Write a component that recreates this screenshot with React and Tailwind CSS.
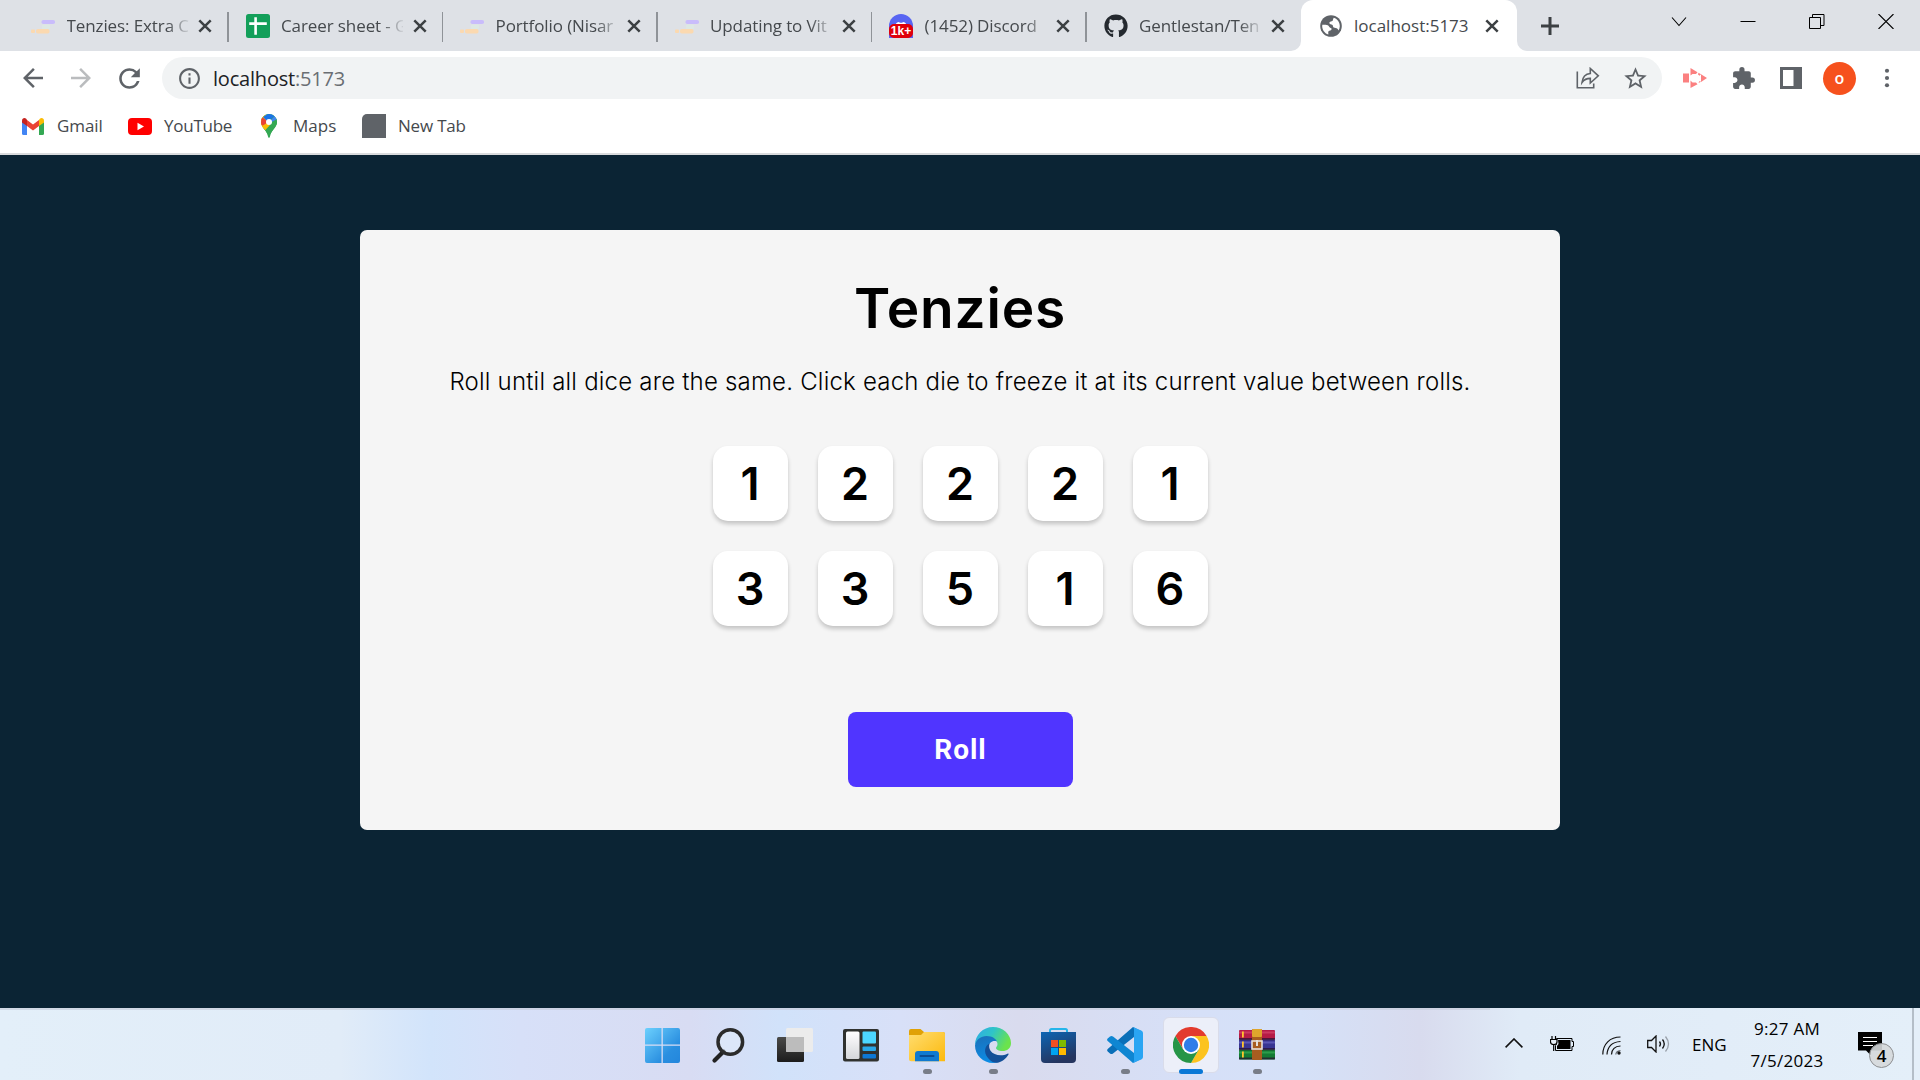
import React from "react";
import { MdExtension, MdStarBorder, MdOutlineInfo, MdRefresh, MdArrowBack, MdArrowForward } from "react-icons/md";
import { FaGithub, FaDiscord } from "react-icons/fa";

function ScrimbaIcon() {
  return (
    <svg viewBox="0 0 24 24" className="h-6 w-6 shrink-0">
      <rect x="10.5" y="6" width="13.5" height="4" rx="1.8" fill="#c9bcfb" />
      <rect x="11" y="10.5" width="8" height="4.5" rx="1" fill="#dde8e4" />
      <rect x="5" y="15" width="13.5" height="4.5" rx="1.8" fill="#fbd9b0" />
      <rect x="0" y="15.5" width="4" height="3.5" rx="1" fill="#fbd9b0" />
    </svg>
  );
}

function SheetsIcon() {
  return (
    <svg viewBox="0 0 24 24" className="h-6 w-6 shrink-0">
      <rect width="24" height="24" rx="2.5" fill="#139f5a" />
      <path d="M3.2 9.6h17.6M9.6 3.2v17.6" stroke="#fff" strokeWidth="2.6" fill="none" />
    </svg>
  );
}

function DiscordIcon() {
  return (
    <div className="relative h-6 w-6 shrink-0 overflow-hidden rounded-t-full rounded-b-[5px] bg-[#5865f2]">
      <FaDiscord className="absolute left-[5px] top-[6px] text-[14px] text-white" />
      <span className="absolute bottom-0 left-0 flex h-[14px] w-6 items-center justify-center rounded-[5px] bg-[#e0000b] font-['Liberation_Sans'] text-[12px] font-bold leading-none text-white">
        1k+
      </span>
    </div>
  );
}

function GlobeIcon() {
  return (
    <svg viewBox="0 0 22 22" className="h-[22px] w-[22px] shrink-0">
      <circle cx="11" cy="11" r="10.8" fill="#5f6368" />
      <path d="M2.300 9.800c2.200-.3 5-.2 6.200 1 .9.900.7 1.800 2.200 2.100 1 .2 1.200 1.300.4 2.100-.9.900-2.700.6-2.900 2-.1.800.3 1.600.2 2.600C4.500 18.300 1.600 14.500 2.300 9.800z" fill="#fff" />
      <path d="M13.800 2.700c3.700 1.300 6.100 4.700 6 8.600-.1 1.500-.5 2.900-1.200 4.100-.6-1.300-1.500-2.400-3-2.500-1.300-.1-2.500-.2-2.600-1.700-.1-1.300-1.300-1.500-2.500-1.900-1.300-.4-1.500-1.900-.3-2.500.9-.5 2.200-.2 2.600-1.300.3-.9.200-1.900 1-2.800z" fill="#fff" />
    </svg>
  );
}

const TABS = [
  { title: "Tenzies: Extra C", icon: <ScrimbaIcon /> },
  { title: "Career sheet - G", icon: <SheetsIcon /> },
  { title: "Portfolio (Nisar", icon: <ScrimbaIcon /> },
  { title: "Updating to Vit", icon: <ScrimbaIcon /> },
  { title: "(1452) Discord", icon: <DiscordIcon /> },
  { title: "Gentlestan/Ten", icon: <FaGithub className="h-6 w-6 shrink-0 text-[#24292f]" /> },
];

function CloseX() {
  return (
    <svg viewBox="0 0 14 14" className="h-[14px] w-[14px] shrink-0">
      <path d="M1.300 1.300l11.400 11.400M12.700 1.300L1.300 12.700" stroke="#3c4043" strokeWidth="2.500" />
    </svg>
  );
}

function TabStrip() {
  return (
    <div className="flex h-[51px] bg-[#dee1e6] pl-[14px]">
      {TABS.map((tab, i) => (
        <div key={i} className="flex h-full w-[214.5px] shrink-0 items-center pl-[17px]">
          {tab.icon}
          <div className="ml-[11.500px] w-[122px] overflow-hidden whitespace-nowrap text-[17px] tracking-[-0.100px] text-[#45494d] [mask-image:linear-gradient(to_right,black_82%,transparent_102%)]">
            {tab.title}
          </div>
          <div className="ml-[9.500px] flex">
            <CloseX />
          </div>
          {i < 5 && <div className="ml-auto mb-[-2px] h-[30px] w-[1.500px] bg-[#8f9398]" />}
        </div>
      ))}
      <div className="relative flex h-full w-[215.500px] shrink-0 items-center rounded-t-[12px] bg-white pl-[19px]">
        <svg viewBox="0 0 10 10" className="absolute -left-[10px] bottom-0 h-[10px] w-[10px]">
          <path d="M10 0v10H0A10 10 0 0 0 10 0z" fill="#fff" />
        </svg>
        <svg viewBox="0 0 10 10" className="absolute -right-[10px] bottom-0 h-[10px] w-[10px]">
          <path d="M0 0v10h10A10 10 0 0 1 0 0z" fill="#fff" />
        </svg>
        <GlobeIcon />
        <div className="ml-3 w-[116px] whitespace-nowrap text-[17px] text-[#45494d]">localhost:5173</div>
        <div className="ml-[15px] flex">
          <CloseX />
        </div>
      </div>
      <svg viewBox="0 0 18 18" className="ml-[24px] mt-[16.500px] h-[18px] w-[18px]">
        <path d="M0 9h18M9 0v18" stroke="#3c4043" strokeWidth="3" />
      </svg>
      <div className="ml-auto mt-[14px] flex h-[15px] gap-[53px] pr-[26px] text-black">
        <svg viewBox="0 0 16 15" className="h-[15px] w-4" fill="none" stroke="currentColor" strokeWidth="1.100">
          <path d="M1 3.500l7 8 7-8" />
        </svg>
        <svg viewBox="0 0 16 15" className="h-[15px] w-4" fill="none" stroke="currentColor">
          <path d="M.5 7.500h15" />
        </svg>
        <svg viewBox="0 0 16 15" className="h-[15px] w-4" fill="none" stroke="currentColor">
          <path d="M.5 3.500h11v11H.500zM3.500 3.500v-3h11.500v11h-3" />
        </svg>
        <svg viewBox="0 0 16 15" className="h-[15px] w-4" fill="none" stroke="currentColor" strokeWidth="1.100">
          <path d="M.5 0l15 15M15.500 0l-15 15" />
        </svg>
      </div>
    </div>
  );
}

function Toolbar() {
  return (
    <div className="flex h-[54px] items-center bg-white pl-[18px] pr-[19px] text-[#5f6368]">
      <MdArrowBack className="h-[30px] w-[30px]" />
      <MdArrowForward className="ml-[18px] h-[30px] w-[30px] text-[#babcbe]" />
      <MdRefresh className="ml-[18px] h-[31px] w-[31px]" />
      <div className="ml-[17px] flex h-[42px] w-[1500px] items-center rounded-full bg-[#f1f3f4] pl-[15px] pr-[13px]">
        <MdOutlineInfo className="h-[25px] w-[25px]" />
        <div className="ml-[11px] whitespace-nowrap pt-px text-[20px] tracking-[-0.200px] text-[#202124]">
          localhost<span className="text-[#6a6e73]">:5173</span>
        </div>
        <svg viewBox="0 0 24 22" className="ml-auto h-[22px] w-6" fill="none" stroke="currentColor" strokeWidth="1.600">
          <path d="M1.300 4.500v16.200h16.400v-4.200" />
          <path d="M6 15.500c.6-5.500 3.500-8.700 8.300-9V1.500l8 7.300-8 7.200v-4.600c-3.700 0-6.200 1.200-8.300 4.100z" />
        </svg>
        <MdStarBorder className="ml-[22px] h-[27px] w-[27px]" />
      </div>
      <svg viewBox="0 0 24 20" className="ml-[21px] h-5 w-6">
        <path d="M0 5.500h6v9H0zM7.500 0l7 4.200L13 6H9.500L7.500 7.500zM15.500 4.700l2.500 1.500-1.500 1.500L15 6.500zM18 6.300l6 3.700-6 4zM7.500 12.500l2 2H13l1.500 1.800L7.500 20zM15.500 15l1-2 1.500.8z" fill="#fb8080" />
      </svg>
      <MdExtension className="ml-[24px] h-[25px] w-[25px]" />
      <svg viewBox="0 0 22 22" className="ml-[24px] h-[22px] w-[22px]">
        <path d="M0 0h22v22H0zM3 3v16h10.500V3z" fillRule="evenodd" fill="currentColor" />
      </svg>
      <div className="ml-[21px] flex h-[33px] w-[33px] items-center justify-center rounded-full bg-[#f6511d] pb-px text-[16px] font-semibold text-white">
        o
      </div>
      <svg viewBox="0 0 6 22" className="ml-auto mr-[11px] h-[20px] w-[6px]">
        <circle cx="3" cy="3" r="2.300" fill="currentColor" />
        <circle cx="3" cy="11" r="2.300" fill="currentColor" />
        <circle cx="3" cy="19" r="2.300" fill="currentColor" />
      </svg>
    </div>
  );
}

function Bookmarks() {
  return (
    <div className="flex h-[50px] items-start border-b-2 border-[#dadbdd] bg-white pl-[22px] text-[17px] text-[#45494d]">
      <div className="flex h-[42px] items-center">
        <svg viewBox="0 0 22 17" className="h-[17px] w-[22px]">
          <path d="M0 3v12.500Q0 17 1.500 17H5V7z" fill="#4285f4" />
          <path d="M22 3v12.500q0 1.500-1.500 1.500H17V7z" fill="#34a853" />
          <path d="M17 2v6l5-3.600V2.500C22 .2 19.500-.6 17.800.7z" fill="#fbbc04" />
          <path d="M5 8V2l6 4.500L17 2v6l-6 4.500z" fill="#ea4335" />
          <path d="M0 2.500v1.900L5 8V2L4.200.7C2.500-.6 0 .2 0 2.500z" fill="#c5221f" />
        </svg>
        <span className="ml-[13px] w-[71px] tracking-[-0.1px]">Gmail</span>
        <svg viewBox="0 0 24 17" className="h-[17px] w-6">
          <rect width="24" height="17" rx="4" fill="#f00" />
          <path d="M9.500 4.800v7.400l6.500-3.700z" fill="#fff" />
        </svg>
        <span className="ml-3 w-[84px] tracking-[-0.25px]">YouTube</span>
        <svg viewBox="0 0 16 24" className="ml-[13px] h-6 w-4">
          <defs>
            <clipPath id="pin">
              <path d="M8 0a8 8 0 0 1 8 8c0 5.500-5.500 7.500-7 14.500-.3 1.800-1.700 1.800-2 0C5.500 15.500 0 13.500 0 8a8 8 0 0 1 8-8z" />
            </clipPath>
          </defs>
          <g clipPath="url(#pin)">
            <rect width="16" height="24" fill="#34a853" />
            <path d="M0 16L12.500 1H0z" fill="#fbbc04" />
            <path d="M-1 10l3-7 6 5-6 7z" fill="#fbbc04" />
            <path d="M0 2.500L8 8 2.500 12.500-2 9z" fill="#ea4335" />
            <path d="M2 2.900L7 8 13.800 1.500 8-1z" fill="#1a73e8" />
            <path d="M14 1.800L8 8l-1.500 8L17 5z" fill="#4285f4" />
            <path d="M2 14.500L9 9l7-4v6L8 22z" fill="#34a853" />
            <path d="M1 12l5-3 3 2-5.500 6z" fill="#fbbc04" />
          </g>
          <circle cx="8" cy="8" r="3" fill="#fff" />
        </svg>
        <span className="ml-4 w-[69px]">Maps</span>
        <div className="h-6 w-6 rounded-tl-[5px] bg-[#5f6368]" />
        <span className="ml-3 whitespace-nowrap tracking-[-0.2px]">New Tab</span>
      </div>
    </div>
  );
}

const DICE = [1, 2, 2, 2, 1, 3, 3, 5, 1, 6];

function Game() {
  return (
    <main className="flex h-[853px] flex-col items-center bg-[#0b2434] pt-[75px] font-['Inter',sans-serif] text-black">
      <section className="flex h-[600px] w-[1200px] flex-col items-center rounded-[7px] bg-[#f5f5f5] pt-[43px]">
        <h1 className="text-[55px] font-semibold leading-[70px] tracking-[0.800px]">Tenzies</h1>
        <p className="mt-[24px] whitespace-nowrap text-[24px] font-light leading-[30px] tracking-[0.208px]">
          Roll until all dice are the same. Click each die to freeze it at its current value between rolls.
        </p>
        <div className="mt-[49px] grid grid-cols-5 gap-[30px]">
          {DICE.map((value, i) => (
            <div
              key={i}
              className="flex h-[75px] w-[75px] items-center justify-center rounded-[15px] bg-white text-[45px] font-semibold leading-none shadow-[0_3px_4px_rgba(0,0,0,0.2)]"
            >
              {value}
            </div>
          ))}
        </div>
        <button className="mt-[86px] h-[75px] w-[225px] rounded-[8px] bg-[#5035ff] pl-px pt-px font-['Roboto',sans-serif] text-[28px] font-bold tracking-[1px] text-white">
          Roll
        </button>
      </section>
    </main>
  );
}

function TaskIcon({ children, dot }) {
  return (
    <div className="flex w-[66px] flex-col items-center pt-[18px]">
      <svg viewBox="0 0 36 38" className="h-[38px] w-9">{children}</svg>
      {dot && <div className="mt-[5px] h-[5px] w-[9px] rounded-full bg-[#787d88]" />}
    </div>
  );
}

function TaskbarIcons() {
  return (
    <div className="flex h-[72px]">
      <svg width="0" height="0" className="absolute">
        <defs>
          <linearGradient id="win" x1="0" y1="0" x2="36" y2="36" gradientUnits="userSpaceOnUse">
            <stop offset="0" stopColor="#6fd3ff" />
            <stop offset=".7" stopColor="#2a8fe0" />
            <stop offset="1" stopColor="#2386dc" />
          </linearGradient>
          <linearGradient id="white" x1="0" y1="0" x2="0" y2="1">
            <stop offset="0" stopColor="#fff" />
            <stop offset="1" stopColor="#d5d7da" />
          </linearGradient>
          <linearGradient id="dark" x1="0" y1="0" x2="0" y2="1">
            <stop offset="0" stopColor="#4a4a48" />
            <stop offset="1" stopColor="#1c1c1c" />
          </linearGradient>
          <linearGradient id="folder" x1="0" y1="0" x2="1" y2="1">
            <stop offset="0" stopColor="#ffdd70" />
            <stop offset="1" stopColor="#fcb90c" />
          </linearGradient>
          <linearGradient id="edgeTop" x1="0" y1="0" x2="1" y2=".4">
            <stop offset="0" stopColor="#2fa9e8" />
            <stop offset=".5" stopColor="#2fc4c8" />
            <stop offset="1" stopColor="#6be34c" />
          </linearGradient>
          <linearGradient id="edgeLeft" x1="0" y1="0" x2=".3" y2="1">
            <stop offset="0" stopColor="#1b6fb8" />
            <stop offset="1" stopColor="#0c8ce4" />
          </linearGradient>
          <linearGradient id="store" x1="0" y1="0" x2=".4" y2="1">
            <stop offset="0" stopColor="#0d65b4" />
            <stop offset="1" stopColor="#25355f" />
          </linearGradient>
        </defs>
      </svg>
      <TaskIcon>
        <path d="M0 4Q0 2 2 2H16.500V18.500H0zM17.800 2H33q2 0 2 2V18.500H17.800zM0 19.800H16.500V37H2q-2 0-2-2zM17.800 19.800H35V35q0 2-2 2H17.800z" fill="url(#win)" />
      </TaskIcon>
      <TaskIcon>
        <path d="M12.500 25.500L3.500 34.500" stroke="#222" strokeWidth="4.200" strokeLinecap="round" />
        <circle cx="19.300" cy="16" r="12.300" fill="#e4effb" fillOpacity=".5" stroke="#2b2b2b" strokeWidth="3.500" />
      </TaskIcon>
      <TaskIcon>
        <rect x="0" y="11" width="27" height="25" rx="1.500" fill="url(#dark)" />
        <rect x="9" y="2" width="27" height="24" rx="1.500" fill="#ececec" />
        <path d="M9 11h18v15H10.500Q9 26 9 24.500z" fill="#bcbcbc" />
      </TaskIcon>
      <TaskIcon>
        <rect x="0" y="3" width="36" height="32.500" rx="2" fill="#30322f" />
        <rect x="3" y="5.500" width="13.500" height="27.500" rx="1.500" fill="url(#white)" />
        <rect x="19.500" y="5.500" width="13.500" height="12" rx="1" fill="#4cd7ff" />
        <rect x="19.500" y="20.500" width="13.500" height="4.500" rx="1" fill="#29a8e8" />
        <rect x="19.500" y="28" width="13.500" height="4.500" rx="1" fill="#0d78d4" />
      </TaskIcon>
      <TaskIcon dot>
        <path d="M0 5Q0 3 2 3h9.500l3.500 3h19q2 0 2 2v10H0z" fill="#e0a106" />
        <path d="M0 9h12l3-3h19q2 0 2 2v27.300H2q-2 0-2-2z" fill="url(#folder)" />
        <path d="M6 35.300V28q0-3 3-3h18q3 0 3 3v7.300z" fill="#0f7ad0" />
        <path d="M11.500 30h13" stroke="#0a4d93" strokeWidth="2" strokeLinecap="round" />
      </TaskIcon>
      <TaskIcon dot>
        <path d="M0 19C0 9 8 1 18 1s18 7.500 18 16c0 5.500-4 8-8.500 8-4 0-6.500-1.500-6.500-3 0-1 1.500-1.500 1.500-4 0-3.500-4-6.500-10-6.500C6 11.500 2 14.500 0 19z" fill="url(#edgeTop)" />
        <path d="M0 19.500C1 13.500 6 10 11.500 10c6 0 9.500 3 10.500 5.500-4-1.500-8.500 1-8.500 6C13.500 29 20 34 27 33.500 24.500 36 21.500 37 18 37 8 37 0 29 0 19.500z" fill="url(#edgeLeft)" />
        <path d="M14.500 17.500C10 19.500 8 26 13 32c3 3.500 6 5 9 4.800 5-.8 9-4 11.500-8.300.3-.7-.3-1.200-1-.8-6 3-14 1.500-17-3-1.400-2.300-1.700-4.500-1-7.200z" fill="#134f98" />
      </TaskIcon>
      <TaskIcon>
        <path d="M9 9V4.500Q9 3 10.500 3h14q1.500 0 1.500 1.500V9" fill="none" stroke="#25b5ea" strokeWidth="2" />
        <path d="M0 6h35v27q0 4-4 4H4q-4 0-4-4z" fill="url(#store)" />
        <path d="M10 14h7v7h-7z" fill="#f25022" />
        <path d="M18 14h7v7h-7z" fill="#7fba00" />
        <path d="M10 22h7v7h-7z" fill="#00a4ef" />
        <path d="M18 22h7v7h-7z" fill="#ffb900" />
      </TaskIcon>
      <TaskIcon dot>
        <path d="M26 1L35 5.500 27 11 6 27.500Q4.500 28.700 3 27.500L.7 25.500Q-.5 24.300.7 23z" fill="#0a6fb8" />
        <path d="M26 37L35 32.500 27 27 6 10.500Q4.500 9.300 3 10.500L.7 12.500Q-.5 13.700.7 15z" fill="#0f86d2" />
        <path d="M26 1L34.700 4.800Q36 5.500 36 7v24q0 1.500-1.300 2.200L26 37q1-.7 1-2.500v-31Q27 1.700 26 1z" fill="#2aa5f3" />
      </TaskIcon>
      <div className="flex w-[66px] flex-col items-center pt-[9px]">
        <div className="flex h-14 w-14 flex-col items-center rounded-[6px] border border-[#d9dcea] bg-[#eceff9] pt-[9px]">
          <svg viewBox="0 0 36 36" className="h-9 w-9 shrink-0">
            <path d="M2.400 9A18 18 0 0 1 33.600 9H18L10.200 22.500z" fill="#e33b2e" />
            <path d="M33.600 9A18 18 0 0 1 18 36l7.800-13.500L18 9z" fill="#fcc31e" />
            <path d="M18 36A18 18 0 0 1 2.400 9l7.800 13.500H25.800z" fill="#269547" />
            <circle cx="18" cy="18" r="9" fill="#fff" />
            <circle cx="18" cy="18" r="7.200" fill="#2f7de9" />
          </svg>
          <div className="mt-[6px] h-[5px] w-6 shrink-0 rounded-full bg-[#0a78d6]" />
        </div>
      </div>
      <TaskIcon dot>
        <rect x="0" y="4" width="36" height="9.500" rx="1" fill="#b51c46" />
        <rect x="0" y="5.500" width="36" height="2" fill="#cb3a60" />
        <rect x="0" y="13.500" width="36" height="10" rx="1" fill="#383592" />
        <rect x="0" y="15.500" width="36" height="2" fill="#5a57b4" />
        <rect x="0" y="23.500" width="36" height="10" rx="1" fill="#147a34" />
        <rect x="0" y="25.500" width="36" height="2" fill="#2c9c4b" />
        <path d="M0 12h36v2.200H0zM0 22h36v2.200H0zM0 31.500h36v2H0z" fill="#2a1030" opacity=".7" />
        <path d="M3 5.500h1.800v6H3zM3 15.500h1.800v6H3zM3 25.500h1.800v6H3z" fill="#ffc52e" />
        <rect x="13" y="3" width="10" height="31" rx="1" fill="#a85d20" />
        <rect x="13" y="3" width="10" height="8" rx="1" fill="#dfa52c" />
        <rect x="13" y="15" width="10" height="8" fill="none" stroke="#e5e0da" strokeWidth="1.600" />
        <path d="M18 14v6" stroke="#e5e0da" strokeWidth="2" />
      </TaskIcon>
    </div>
  );
}

function Tray() {
  return (
    <div className="flex h-[72px] w-[415px] items-start text-[17px] text-black">
      <svg viewBox="0 0 18 10" className="mt-[30px] h-[10px] w-[18px]" fill="none" stroke="#111" strokeWidth="1.600">
        <path d="M.6 9.400L9 1l8.400 8.400" />
      </svg>
      <svg viewBox="0 0 24 16" className="ml-[27px] mt-[28px] h-4 w-6">
        <path d="M6.500 2.500h15.500v3h1.500v5H22v4H5.500v-5l1-1z" fill="none" stroke="#000" />
        <path d="M8 4h12.500v9H7v-3l1.500-2z" fill="#000" />
        <path d="M2 0v3M5.500 0v3M.5 3.500h6.500v2.500q0 2.500-3.200 2.500T.5 6zM3.700 8.500v6.500" fill="#e6eff8" stroke="#000" strokeWidth="1.200" />
      </svg>
      <svg viewBox="0 0 20 19" className="ml-[28px] mt-[28px] h-[19px] w-5" fill="none" stroke="#111" strokeWidth="1.200">
        <path d="M.8 18.500C.8 8 8 1 18.500 1" />
        <path d="M5 18.500C5.500 11 10 6 18.500 5.500" />
        <path d="M9.500 18.500c.3-5 3.500-8.300 9-8.500" />
        <path d="M13.800 18.500c.2-2 1.600-3.800 4.700-4" opacity=".6" />
        <circle cx="17" cy="17" r="1.700" fill="#111" stroke="none" />
      </svg>
      <svg viewBox="0 0 23 18" className="ml-[25px] mt-[27px] h-[18px] w-[23px]" fill="none" stroke="#111" strokeWidth="1.300">
        <path d="M.7 5.500h3.800L9 1v16l-4.500-4.500H.7z" />
        <path d="M12.500 6.500q2 2.500 0 5M15.500 4.500q3.500 4.500 0 9" />
        <path d="M18.500 1.500q6 7.500 0 15" stroke="#9aa1aa" />
      </svg>
      <span className="ml-[22px] mt-[24px] w-[36px] leading-[25px]">ENG</span>
      <div className="ml-[19px] mt-[5px] w-[80px] whitespace-nowrap text-center leading-8">
        <div className="tracking-[0.300px]">9:27 AM</div>
        <div className="tracking-[0.300px]">7/5/2023</div>
      </div>
      <div className="relative ml-[31px] mt-[24px] h-[40px] w-9">
        <svg viewBox="0 0 24 24" className="h-6 w-6">
          <path d="M0 0h24v18.500h-11v5l-5-5H0z" fill="#000" />
          <path d="M5 5.500h14M5 9.500h14M5 13.500h10" stroke="#fff" strokeWidth="1.200" />
        </svg>
        <div className="absolute left-[11px] top-[11px] flex h-[25px] w-[25px] items-center justify-center rounded-full border border-[#8d8f92] bg-[#d5d8da]/90 pb-px text-[17px] font-semibold leading-none">
          4
        </div>
      </div>
      <div className="ml-auto mr-[6px] h-[72px] w-[2px] bg-[#b4bec8]" />
    </div>
  );
}

export default function App() {
  return (
    <div className="flex h-[1080px] w-[1920px] flex-col overflow-hidden font-['Open_Sans','Noto_Sans',sans-serif]">
      <TabStrip />
      <Toolbar />
      <Bookmarks />
      <Game />
      <footer className="relative flex h-[72px] justify-between bg-[linear-gradient(90deg,#e3eff9_0px,#e1ecf8_340px,#d2e4fb_430px,#d7e0f8_520px,#d8dcf3_690px,#d1e2fa_780px,#d8e0f8_900px,#d9dbee_1020px,#d6e0f8_1200px,#d5e1f8_1300px,#d8dbee_1420px,#e0ebf7_1520px,#e4eff9_1920px)]">
        <div className="absolute left-0 top-0 h-[2px] w-[1490px] bg-[#c6cbd9]/60" />
        <div className="w-[630px]" />
        <TaskbarIcons />
        <div className="flex-1" />
        <Tray />
      </footer>
    </div>
  );
}
